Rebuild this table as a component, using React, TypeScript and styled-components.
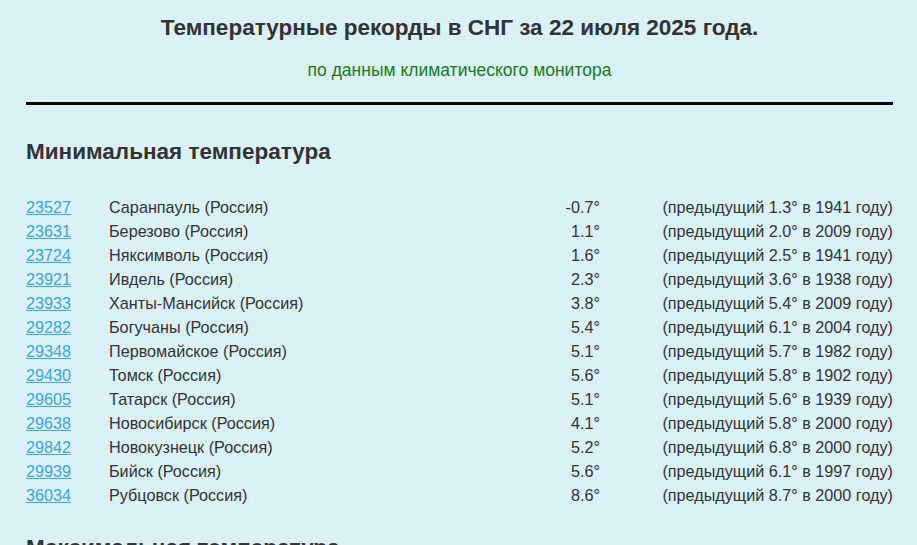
import React from 'react';
import styled, { createGlobalStyle } from 'styled-components';

const GlobalStyle = createGlobalStyle`
  html, body {
    margin: 0;
    padding: 0;
    background: #daf1f8;
  }
  body {
    font-family: "Liberation Sans", Arial, sans-serif;
    color: #333;
  }
`;

const Page = styled.div`
  padding: 15px 24px 0 26px;
  height: 545px;
  overflow: hidden;
  box-sizing: border-box;
`;

const Title = styled.h1`
  margin: 0;
  font-size: 22.5px;
  line-height: 26px;
  font-weight: bold;
  text-align: center;
  color: #333;
`;

const Subtitle = styled.div`
  margin-top: 20px;
  font-size: 17.5px;
  line-height: 19px;
  text-align: center;
  color: #197a19;
`;

const Rule = styled.hr`
  margin: 22px 0 0;
  border: none;
  height: 3px;
  background: #000;
`;

const SectionTitle = styled.h2`
  margin: 34px 0 30px;
  font-size: 22.5px;
  line-height: 26px;
  font-weight: bold;
  color: #333;
`;

const Section = styled.section`
  & + & > h2 {
    margin-top: 0;
  }
`;

const Table = styled.div`
  display: grid;
  grid-template-columns: 83px 1fr 100px 293px;
  grid-auto-rows: 24px;
  align-items: center;
  font-size: 16.2px;
  margin-bottom: 28px;
`;

const Cell = styled.div<{ $right?: boolean }>`
  text-align: ${(p) => (p.$right ? 'right' : 'left')};
  white-space: nowrap;
`;

const StationLink = styled.a`
  color: #3ba5dc;
  text-decoration: underline;
`;

type Rec = [string, string, string, string, string];

const minRecords: Rec[] = [
  ['23527', 'Саранпауль (Россия)', '-0.7', '1.3', '1941'],
  ['23631', 'Березово (Россия)', '1.1', '2.0', '2009'],
  ['23724', 'Няксимволь (Россия)', '1.6', '2.5', '1941'],
  ['23921', 'Ивдель (Россия)', '2.3', '3.6', '1938'],
  ['23933', 'Ханты-Мансийск (Россия)', '3.8', '5.4', '2009'],
  ['29282', 'Богучаны (Россия)', '5.4', '6.1', '2004'],
  ['29348', 'Первомайское (Россия)', '5.1', '5.7', '1982'],
  ['29430', 'Томск (Россия)', '5.6', '5.8', '1902'],
  ['29605', 'Татарск (Россия)', '5.1', '5.6', '1939'],
  ['29638', 'Новосибирск (Россия)', '4.1', '5.8', '2000'],
  ['29842', 'Новокузнецк (Россия)', '5.2', '6.8', '2000'],
  ['29939', 'Бийск (Россия)', '5.6', '6.1', '1997'],
  ['36034', 'Рубцовск (Россия)', '8.6', '8.7', '2000'],
];

const RecordTable = ({ title, rows }: { title: string; rows: Rec[] }) => (
  <Section>
    <SectionTitle>{title}</SectionTitle>
    <Table>
      {rows.map(([id, name, value, prev, year]) => (
        <React.Fragment key={id}>
          <Cell>
            <StationLink href="#">{id}</StationLink>
          </Cell>
          <Cell>{name}</Cell>
          <Cell $right>{value}°</Cell>
          <Cell $right>
            (предыдущий {prev}° в {year} году)
          </Cell>
        </React.Fragment>
      ))}
    </Table>
  </Section>
);

export default function App() {
  return (
    <>
      <GlobalStyle />
      <Page>
        <Title>Температурные рекорды в СНГ за 22 июля 2025 года.</Title>
        <Subtitle>по данным климатического монитора</Subtitle>
        <Rule />
        <RecordTable title="Минимальная температура" rows={minRecords} />
        <RecordTable title="Максимальная температура" rows={[]} />
      </Page>
    </>
  );
}
